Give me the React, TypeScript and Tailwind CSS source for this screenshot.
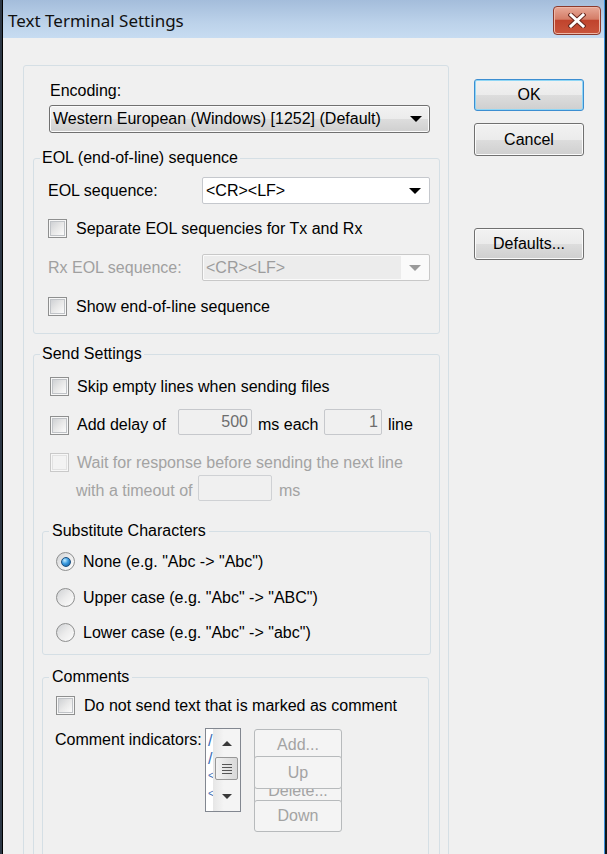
import React from "react";

function Caret({ color = "#000" }: { color?: string }) {
  return (
    <svg width="12" height="6" viewBox="0 0 12 6" className="shrink-0">
      <path d="M0 0H12L6 6Z" fill={color} />
    </svg>
  );
}

function CheckBox({ disabled = false }: { disabled?: boolean }) {
  return (
    <span
      className={`flex h-[19px] w-[19px] shrink-0 items-center justify-center border ${
        disabled ? "border-[#c9c9c9] bg-[#f7f7f7]" : "border-[#8e8f8f] bg-[#f7f7f7]"
      }`}
    >
      <span
        className={`h-[15px] w-[15px] border ${
          disabled
            ? "border-[#e2e2e2] bg-[#f3f3f3]"
            : "border-[#c0c3c7] bg-gradient-to-br from-[#cfd1d4] via-[#e8e8e8] to-[#fbfbfb]"
        }`}
      />
    </span>
  );
}

function Radio({ checked = false }: { checked?: boolean }) {
  return (
    <span className="flex h-[19px] w-[19px] shrink-0 items-center justify-center rounded-full border border-[#8e8f8f] bg-gradient-to-br from-[#cfd1d4] via-[#ececec] to-[#fdfdfd]">
      {checked && (
        <span className="h-[10px] w-[10px] rounded-full border border-[#1b4f80] bg-[radial-gradient(circle_at_35%_30%,#c4ecff,#3a9be0_45%,#0d4f8c)]" />
      )}
    </span>
  );
}

function Group({
  title,
  className,
  legendClass = "ml-[6px] px-[2px]",
  children,
}: {
  title: string;
  className: string;
  legendClass?: string;
  children: React.ReactNode;
}) {
  return (
    <fieldset className={`rounded-[3px] border border-[#d5dfe5] ${className}`}>
      <legend className={legendClass}>{title}</legend>
      {children}
    </fieldset>
  );
}

function WinButton({
  children,
  isDefault = false,
  className = "",
}: {
  children: React.ReactNode;
  isDefault?: boolean;
  className?: string;
}) {
  return (
    <div
      className={`flex items-center justify-center rounded-[3px] border bg-[linear-gradient(#f2f2f2_0%,#ebebeb_50%,#dddddd_50%,#cfcfcf_100%)] ${
        isDefault
          ? "border-[#3c8ed1] shadow-[inset_0_0_0_1px_#8fd6f5]"
          : "border-[#707070] shadow-[inset_0_0_0_1px_#fbfbfb]"
      } ${className}`}
    >
      {children}
    </div>
  );
}

function DisabledButton({ label, className }: { label: string; className: string }) {
  return (
    <div
      className={`absolute left-0 flex h-[32px] w-[88px] items-center justify-center rounded-[3px] border border-[#b7babc] bg-[#f4f4f4] text-[#a3a3a3] ${className}`}
    >
      {label}
    </div>
  );
}

function ListScroll() {
  return (
    <div className="flex h-[84px] w-[36px] border border-[#828790] bg-white">
      <div className="w-[7px] overflow-hidden pl-[2px] pt-[3px] leading-[17.5px] whitespace-nowrap text-[#3b6db5]">
        <div>/</div>
        <div>/</div>
        <div className="text-[10px]">&lt;</div>
        <div className="text-[10px]">&lt;</div>
      </div>
      <div className="flex w-[27px] flex-col items-center bg-[linear-gradient(90deg,#e6e6e6,#f4f4f4_40%,#f4f4f4)]">
        <div className="mt-[12px]">
          <svg width="10" height="5" viewBox="0 0 10 5">
            <path d="M0 5H10L5 0Z" fill="#3a3a3a" />
          </svg>
        </div>
        <div className="mt-[11px] flex h-[23px] w-[23px] flex-col items-center justify-center gap-[2px] rounded-[2px] border border-[#979797] bg-[linear-gradient(90deg,#f3f3f3,#e4e4e4_50%,#d9d9d9)]">
          <span className="h-[1px] w-[10px] bg-[#555]" />
          <span className="h-[1px] w-[10px] bg-[#555]" />
          <span className="h-[1px] w-[10px] bg-[#555]" />
          <span className="h-[1px] w-[10px] bg-[#555]" />
        </div>
        <div className="mt-[14px]">
          <svg width="10" height="5" viewBox="0 0 10 5">
            <path d="M0 0H10L5 5Z" fill="#3a3a3a" />
          </svg>
        </div>
      </div>
    </div>
  );
}

function TitleBar() {
  return (
    <div className="flex h-[38px] shrink-0 items-start justify-between bg-[linear-gradient(#a4bddb,#bcd2ea_60%,#c7dcf1)]">
      <span className="ml-[5px] mt-[11px] font-['Noto_Sans',sans-serif] text-[17px] leading-[20px] text-[#111]">
        Text Terminal Settings
      </span>
      <div className="mr-[3px] mt-[6px] flex h-[29px] w-[48px] items-center justify-center rounded-[4px] border border-[#8b3a2c] bg-[linear-gradient(#e8a998,#d47d67_45%,#c0442d_50%,#c9553c)] shadow-[inset_0_0_0_1px_#eeb8a8]">
        <svg width="18" height="15" viewBox="0 0 18 15">
          <path
            d="M3 2L15 13M15 2L3 13"
            stroke="#6b2a20"
            strokeWidth="5"
            strokeLinecap="square"
          />
          <path
            d="M3 2L15 13M15 2L3 13"
            stroke="#fff"
            strokeWidth="3"
            strokeLinecap="square"
          />
        </svg>
      </div>
    </div>
  );
}

export default function App() {
  return (
    <div className="flex h-[854px] w-[607px] overflow-hidden bg-[#1a1d22] font-['Liberation_Sans',Arial,sans-serif] text-[16px] leading-[18px] text-black">
      <div className="w-[2px] shrink-0 bg-[#2d3846]" />
      <div className="flex w-[603px] shrink-0 flex-col border-l border-r border-l-black border-r-[#3b8fd9] bg-[#f0f0f0]">
        <TitleBar />
        <div className="flex items-start">
          {/* main settings panel */}
          <div className="ml-[20px] mt-[27px] h-[820px] w-[426px] shrink-0 rounded-[3px] border border-[#d5dfe5] pt-[16px]">
            <div className="pl-[26px]">Encoding:</div>
            <WinButton className="ml-[25px] mt-[5px] h-[28px] w-[381px] !justify-between pl-[3px] pr-[7px]">
              <span>Western European (Windows) [1252] (Default)</span>
              <Caret />
            </WinButton>

            <Group title="EOL (end-of-line) sequence" className="ml-[9px] mt-[16px] w-[407px] pb-[17px]">
              <div className="mt-[10px] flex h-[27px] items-center pl-[14px]">
                <span className="w-[154px]">EOL sequence:</span>
                <div className="flex h-[27px] w-[228px] items-center justify-between rounded-[2px] border border-[#c5c8cd] bg-white pl-[3px] pr-[8px]">
                  <span>&lt;CR&gt;&lt;LF&gt;</span>
                  <Caret />
                </div>
              </div>
              <div className="mt-[15px] flex items-center pl-[14px]">
                <CheckBox />
                <span className="ml-[9px]">Separate EOL sequencies for Tx and Rx</span>
              </div>
              <div className="mt-[16px] flex h-[27px] items-center pl-[14px]">
                <span className="w-[154px] text-[#a0a0a0]">Rx EOL sequence:</span>
                <div className="flex h-[27px] w-[228px] items-center rounded-[2px] border border-[#c8c8c8] bg-[#fafafa] pr-[8px]">
                  <span className="ml-[1px] flex h-[23px] w-[197px] items-center bg-[#ececec] pl-[2px] text-[#9c9c9c]">
                    &lt;CR&gt;&lt;LF&gt;
                  </span>
                  <span className="flex-1" />
                  <Caret color="#9a9a9a" />
                </div>
              </div>
              <div className="mt-[16px] flex items-center pl-[14px]">
                <CheckBox />
                <span className="ml-[9px]">Show end-of-line sequence</span>
              </div>
            </Group>

            <Group title="Send Settings" className="ml-[9px] mt-[11px] w-[407px] pb-[40px]">
              <div className="mt-[14px] flex items-center pl-[16px]">
                <CheckBox />
                <span className="ml-[8px]">Skip empty lines when sending files</span>
              </div>
              <div className="mt-[13px] flex h-[26px] items-end pl-[16px]">
                <CheckBox />
                <span className="mb-[1px] ml-[8px] w-[101px]">Add delay of</span>
                <div className="flex h-[26px] w-[74px] items-center justify-end rounded-[2px] border border-[#c6c8cc] pr-[3px] text-[#6d6d6d]">
                  500
                </div>
                <span className="mb-[1px] ml-[6px] w-[66px]">ms each</span>
                <div className="flex h-[26px] w-[58px] items-center justify-end rounded-[2px] border border-[#c6c8cc] pr-[3px] text-[#6d6d6d]">
                  1
                </div>
                <span className="mb-[1px] ml-[6px]">line</span>
              </div>
              <div className="mt-[18px] flex items-center pl-[16px]">
                <CheckBox disabled />
                <span className="ml-[8px] text-[#a3a3a3]">Wait for response before sending the next line</span>
              </div>
              <div className="mt-[3px] flex h-[26px] items-end pl-[42px] text-[#a3a3a3]">
                <span className="mb-[1px] w-[122px]">with a timeout of</span>
                <div className="h-[26px] w-[74px] rounded-[2px] border border-[#cfd1d4]" />
                <span className="mb-[1px] ml-[7px]">ms</span>
              </div>

              <Group
                title="Substitute Characters"
                legendClass="ml-[6px] px-[3px]"
                className="ml-[8px] mt-[21px] w-[389px] pb-[12px]"
              >
                <div className="mt-[12px] flex items-center pl-[13px]">
                  <Radio checked />
                  <span className="ml-[8px]">None (e.g. "Abc -&gt; "Abc")</span>
                </div>
                <div className="mt-[17px] flex items-center pl-[13px]">
                  <Radio />
                  <span className="ml-[8px]">Upper case (e.g. "Abc" -&gt; "ABC")</span>
                </div>
                <div className="mt-[16px] flex items-center pl-[13px]">
                  <Radio />
                  <span className="ml-[8px]">Lower case (e.g. "Abc" -&gt; "abc")</span>
                </div>
              </Group>

              <Group
                title="Comments"
                legendClass="ml-[6px] px-[3px]"
                className="ml-[8px] mt-[13px] h-[220px] w-[387px]"
              >
                <div className="mt-[10px] flex items-center pl-[13px]">
                  <CheckBox />
                  <span className="ml-[9px]">Do not send text that is marked as comment</span>
                </div>
                <div className="mt-[13px] flex items-start pl-[12px]">
                  <span className="mt-[3px] w-[150px]">Comment indicators:</span>
                  <ListScroll />
                  <div className="relative ml-[13px] mt-[1px] h-[104px] w-[88px]">
                    <DisabledButton label="Add..." className="top-0" />
                    <DisabledButton label="Delete..." className="top-[46px]" />
                    <DisabledButton label="Up" className="top-[27px] h-[33px]" />
                    <DisabledButton label="Down" className="top-[71px]" />
                  </div>
                </div>
              </Group>
            </Group>
          </div>

          {/* dialog buttons */}
          <div className="ml-[25px] mt-[41px] flex w-[110px] shrink-0 flex-col">
            <WinButton isDefault className="h-[32px]">OK</WinButton>
            <WinButton className="mt-[12px] h-[33px]">Cancel</WinButton>
            <WinButton className="mt-[72px] h-[32px]">Defaults...</WinButton>
          </div>
        </div>
      </div>
      <div className="w-[2px] shrink-0 bg-[#111418]" />
    </div>
  );
}
